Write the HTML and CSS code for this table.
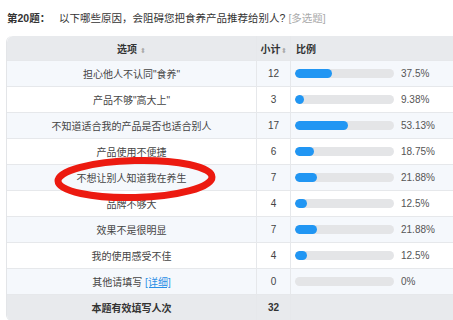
FILE: index.html
```html
<!DOCTYPE html>
<html>
<head>
<meta charset="utf-8">
<link rel="stylesheet" href="styles.css">
</head>
<body>
<div class="page">
  <div class="title"><b>第20题：</b> 以下哪些原因，会阻碍您把食养产品推荐给别人? <span class="tag">[多选题]</span></div>
  <div class="wrap">
    <table class="tbl">
      <thead>
        <tr><th class="c1">选项 <span class="sort">⬍</span></th><th class="c2">小计<span class="sort">⬍</span></th><th class="c3">比例</th></tr>
      </thead>
      <tbody>
        <tr><td class="c1">担心他人不认同"食养"</td><td class="c2">12</td><td class="c3"><div class="bar"><span class="fill" style="width:37.5%"></span></div><span class="pct">37.5%</span></td></tr>
        <tr><td class="c1">产品不够"高大上"</td><td class="c2">3</td><td class="c3"><div class="bar"><span class="fill" style="width:9.38%"></span></div><span class="pct">9.38%</span></td></tr>
        <tr><td class="c1">不知道适合我的产品是否也适合别人</td><td class="c2">17</td><td class="c3"><div class="bar"><span class="fill" style="width:53.13%"></span></div><span class="pct">53.13%</span></td></tr>
        <tr><td class="c1">产品使用不便捷</td><td class="c2">6</td><td class="c3"><div class="bar"><span class="fill" style="width:18.75%"></span></div><span class="pct">18.75%</span></td></tr>
        <tr><td class="c1 mark">不想让别人知道我在养生</td><td class="c2">7</td><td class="c3"><div class="bar"><span class="fill" style="width:21.88%"></span></div><span class="pct">21.88%</span></td></tr>
        <tr><td class="c1">品牌不够大</td><td class="c2">4</td><td class="c3"><div class="bar"><span class="fill" style="width:12.5%"></span></div><span class="pct">12.5%</span></td></tr>
        <tr><td class="c1">效果不是很明显</td><td class="c2">7</td><td class="c3"><div class="bar"><span class="fill" style="width:21.88%"></span></div><span class="pct">21.88%</span></td></tr>
        <tr><td class="c1">我的使用感受不佳</td><td class="c2">4</td><td class="c3"><div class="bar"><span class="fill" style="width:12.5%"></span></div><span class="pct">12.5%</span></td></tr>
        <tr><td class="c1">其他请填写 <a class="link">[详细]</a></td><td class="c2">0</td><td class="c3"><div class="bar"></div><span class="pct">0%</span></td></tr>
      </tbody>
      <tfoot>
        <tr><td class="c1">本题有效填写人次</td><td class="c2">32</td><td class="c3"></td></tr>
      </tfoot>
    </table>
    <svg class="circle" width="172" height="54" viewBox="0 0 172 54"><ellipse cx="84" cy="27" rx="77" ry="18.5" fill="none" stroke="#ec1a10" stroke-width="7" transform="rotate(-1.5 84 27)"/></svg>
  </div>
</div>
</body>
</html>
```

FILE: styles.css
```css
html, body { margin: 0; padding: 0; background: #fff; }
body { width: 453px; height: 320px; overflow: hidden; font-family: "Liberation Sans", "Noto Sans CJK SC", sans-serif; color: #444; }
.page { padding: 9px 0 0 6px; }
.title { font-size: 10.5px; line-height: 18px; color: #333; padding-left: 1px; }
.title b { font-weight: 700; margin-right: 6px; }
.tag { color: #aaa; }
.wrap { position: relative; margin-top: 9px; }
.tbl { border-collapse: separate; border-spacing: 0; width: 462px; table-layout: fixed; font-size: 10px; border-left: 1px solid #e3e5e8; border-radius: 6px 0 0 6px; overflow: hidden; }
.tbl th, .tbl td { height: 25px; padding: 0; border-bottom: 1px solid #e6e8eb; vertical-align: middle; }
.tbl th { background: #e8eaed; font-weight: 700; color: #333; height: 24px; }
.tbl thead th:first-child { border-top-left-radius: 6px; }
.c1 { width: 249px; text-align: center; border-right: 1px solid #e6e8eb; }
.c2 { width: 33px; text-align: center; border-right: 1px solid #e6e8eb; }
.c3 { text-align: left; padding-left: 4px !important; }
th.c3 { padding-left: 5px !important; }
.sort { font-size: 7px; color: #aaa; font-weight: 400; }
tbody tr:nth-child(odd) td { background: #f5f8fc; }
tbody tr:nth-child(even) td { background: #fff; }
tfoot td { background: #e8eaed; font-weight: 700; color: #333; height: 24px; border-bottom: none; }
.bar { display: inline-block; vertical-align: middle; width: 99px; height: 9px; border-radius: 5px; background: #e4e5e7; overflow: hidden; }
.fill { display: block; height: 100%; background: #2196f3; border-radius: 5px; min-width: 9px; }
.pct { display: inline-block; vertical-align: middle; margin-left: 7px; font-size: 10px; color: #555; }
.link { color: #2a8fe6; text-decoration: underline; }
.circle { position: absolute; left: 45px; top: 116px; }
```
